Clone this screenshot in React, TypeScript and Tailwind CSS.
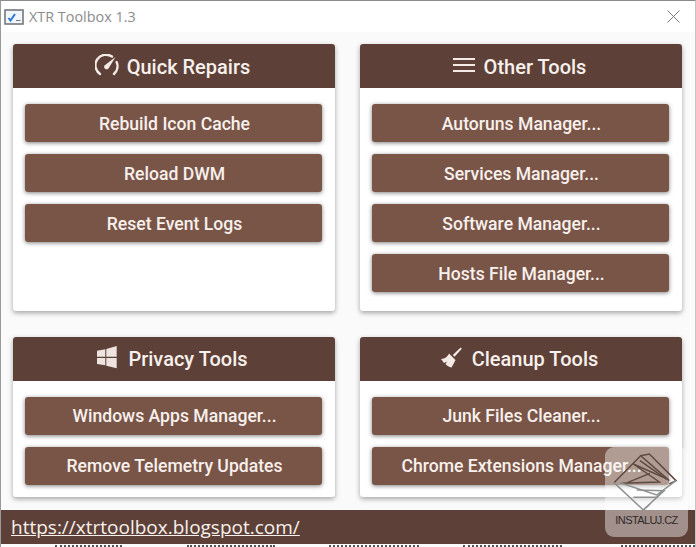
import { ReactNode } from 'react';

function GaugeIcon() {
    return (
        <svg width="24" height="22" viewBox="0 0 24 22" fill="none">
            <path d="M5 20 A10.5 10.5 0 0 1 17 2.6" stroke="#f3e9e5" strokeWidth="2.4" strokeLinecap="round" />
            <path d="M21.6 8 A10.5 10.5 0 0 1 19 20" stroke="#f3e9e5" strokeWidth="2.4" strokeLinecap="round" />
            <path d="M20.5 3 L13.5 14.5 A2.6 2.6 0 0 1 9.2 11.8 Z" fill="#f3e9e5" />
        </svg>
    );
}

function MenuIcon() {
    return (
        <svg width="22" height="14" viewBox="0 0 22 14" fill="#f3e9e5">
            <rect x="0" y="0" width="22" height="2" />
            <rect x="0" y="6" width="22" height="2" />
            <rect x="0" y="12" width="22" height="2" />
        </svg>
    );
}

function WindowsIcon() {
    return (
        <svg width="20" height="23" viewBox="0 0 20 23" fill="#eee3df">
            <path d="M0 4.7 L8.3 3.3 V10.7 H0 Z" />
            <path d="M9.3 3 L19.7 0 V10.7 H9.3 Z" />
            <path d="M0 12 H8.3 V19.3 L0 18 Z" />
            <path d="M9.3 12 H19.7 V22.3 L9.3 19.7 Z" />
        </svg>
    );
}

function BroomIcon() {
    return (
        <svg width="21" height="21" viewBox="0 0 21 21" fill="#f3e9e5">
            <path d="M19.6 0.6 L20.8 1.8 L13.6 9.8 L11.8 8 Z" />
            <path d="M0 12 C4 12 7 9 8 6.5 L14.5 13 C13 16 11.5 19 10.5 20.5 C8 20 6 19 4.5 17 L6 14.5 L3 16 Z" />
        </svg>
    );
}

function ToolButton({ label, textPad }: { label: string; textPad: string }) {
    return (
        <button className={`h-[38px] w-full rounded-[3px] bg-[#795548] pl-[2px] text-[17.6px] font-medium leading-none text-[#f7f0ec] shadow-[0_1px_4px_rgba(0,0,0,0.5)] ${textPad}`}>
            {label}
        </button>
    );
}

function Card({ title, icon, iconGap, lower, items }: { title: string; icon: ReactNode; iconGap: string; lower?: boolean; items: string[] }) {
    return (
        <section className="overflow-hidden rounded-[3px] bg-white shadow-[0_2px_5px_rgba(0,0,0,0.35)]">
            <header className={`flex h-11 items-center justify-center bg-[#5d4037] pr-[3px] text-[20px] font-medium text-[#f7f0ec] ${iconGap}`}>
                <span className="-mt-[3px] flex">{icon}</span>
                <span className={lower ? 'pt-0' : 'pt-[2px]'}>{title}</span>
            </header>
            <div className="flex flex-col gap-3 pt-4 pr-[13px] pl-3">
                {items.map((item) => (
                    <ToolButton key={item} label={item} textPad={lower ? 'pt-[2px]' : 'pt-[4px]'} />
                ))}
            </div>
        </section>
    );
}

// what shows of the page behind the window, along the bottom edge
const behindTicks = [
    { gap: 54, width: 67 },
    { gap: 65, width: 88 },
    { gap: 54, width: 90 },
    { gap: 44, width: 99 },
    { gap: 59, width: 74 },
];

export default function App() {
    return (
        <div className="relative flex h-[547px] w-[696px] flex-col overflow-hidden border-t border-r border-l border-t-[#8a8a8a] border-r-[#c4c4c4] border-l-[#9a9a9a] bg-[#fafafa] font-['Roboto',sans-serif]">
            {/* Title bar */}
            <div className="flex h-[31px] shrink-0 items-center bg-white pr-[15px] pl-[3px]">
                <svg width="20" height="16" viewBox="0 0 20 16" fill="none" className="shrink-0">
                    <rect x="1" y="1" width="18" height="14" fill="#f1f6fb" stroke="#74797d" strokeWidth="1.6" />
                    <path d="M4.5 9 L6.5 11.5 L11 5" stroke="#2a7ad2" strokeWidth="2" />
                    <path d="M12 11.5 H16.5" stroke="#74797d" />
                </svg>
                <span className="ml-[5px] font-['Open_Sans',sans-serif] text-[14.4px] text-[#8c8c8c]">XTR Toolbox 1.3</span>
                <svg width="13" height="13" viewBox="0 0 13 13" className="ml-auto" stroke="#777" strokeWidth="1">
                    <path d="M0.5 0.5 L12.5 12.5 M12.5 0.5 L0.5 12.5" />
                </svg>
            </div>

            {/* Cards */}
            <main className="grid flex-1 grid-cols-[322px_322px] grid-rows-[267px_160px] gap-x-[25px] gap-y-[26px] pt-3 pl-3">
                <Card title="Quick Repairs" icon={<GaugeIcon />} iconGap="gap-2" items={['Rebuild Icon Cache', 'Reload DWM', 'Reset Event Logs']} />
                <Card
                    title="Other Tools"
                    icon={<MenuIcon />}
                    iconGap="gap-[9px]"
                    items={['Autoruns Manager...', 'Services Manager...', 'Software Manager...', 'Hosts File Manager...']}
                />
                <Card title="Privacy Tools" icon={<WindowsIcon />} iconGap="gap-[11px]" lower items={['Windows Apps Manager...', 'Remove Telemetry Updates']} />
                <Card title="Cleanup Tools" icon={<BroomIcon />} iconGap="gap-[10px]" lower items={['Junk Files Cleaner...', 'Chrome Extensions Manager...']} />
            </main>

            {/* Footer link */}
            <footer className="flex h-[34px] shrink-0 items-center bg-[#5d4037] pl-[10px]">
                <a className="font-['Open_Sans',sans-serif] text-[19px] leading-none text-[#f7f0ec] underline">https://xtrtoolbox.blogspot.com/</a>
            </footer>
            <div className="flex h-[3px] shrink-0 items-end">
                {behindTicks.map((tick) => (
                    <span key={tick.gap} className="h-[2px] border-b-2 border-dotted border-[#555]" style={{ marginLeft: tick.gap, width: tick.width }} />
                ))}
            </div>

            {/* Watermark */}
            <div className="absolute top-[446px] left-[604px] flex h-[90px] w-[83px] flex-col items-center justify-end rounded-[9px] bg-[rgba(255,255,255,0.42)] pb-[11px]">
                <svg width="96" height="70" viewBox="0 0 288 210" fill="none" strokeWidth="4.5" className="absolute -top-[7px] -left-[5px]">
                    <g stroke="#5e4a41">
                        <path d="M42 128 L122 47 L208 122" />
                        <path d="M122 47 L148 42 L228 122 L208 132" />
                        <path d="M62 130 L178 126 L100 72 L190 112" />
                        <path d="M82 128 L150 100 M120 62 L200 118" />
                    </g>
                    <g stroke="#8f9192">
                        <path d="M42 128 L130 210 L192 152" />
                        <path d="M228 122 L170 165 L60 128" />
                        <path d="M100 172 L170 172 L192 152 L110 150" />
                        <path d="M130 210 L150 192" />
                    </g>
                </svg>
                <span className="font-['Liberation_Sans',sans-serif] text-[11px] leading-none tracking-[-0.6px] text-[#2f2a28]">INSTALUJ.CZ</span>
            </div>
        </div>
    );
}
